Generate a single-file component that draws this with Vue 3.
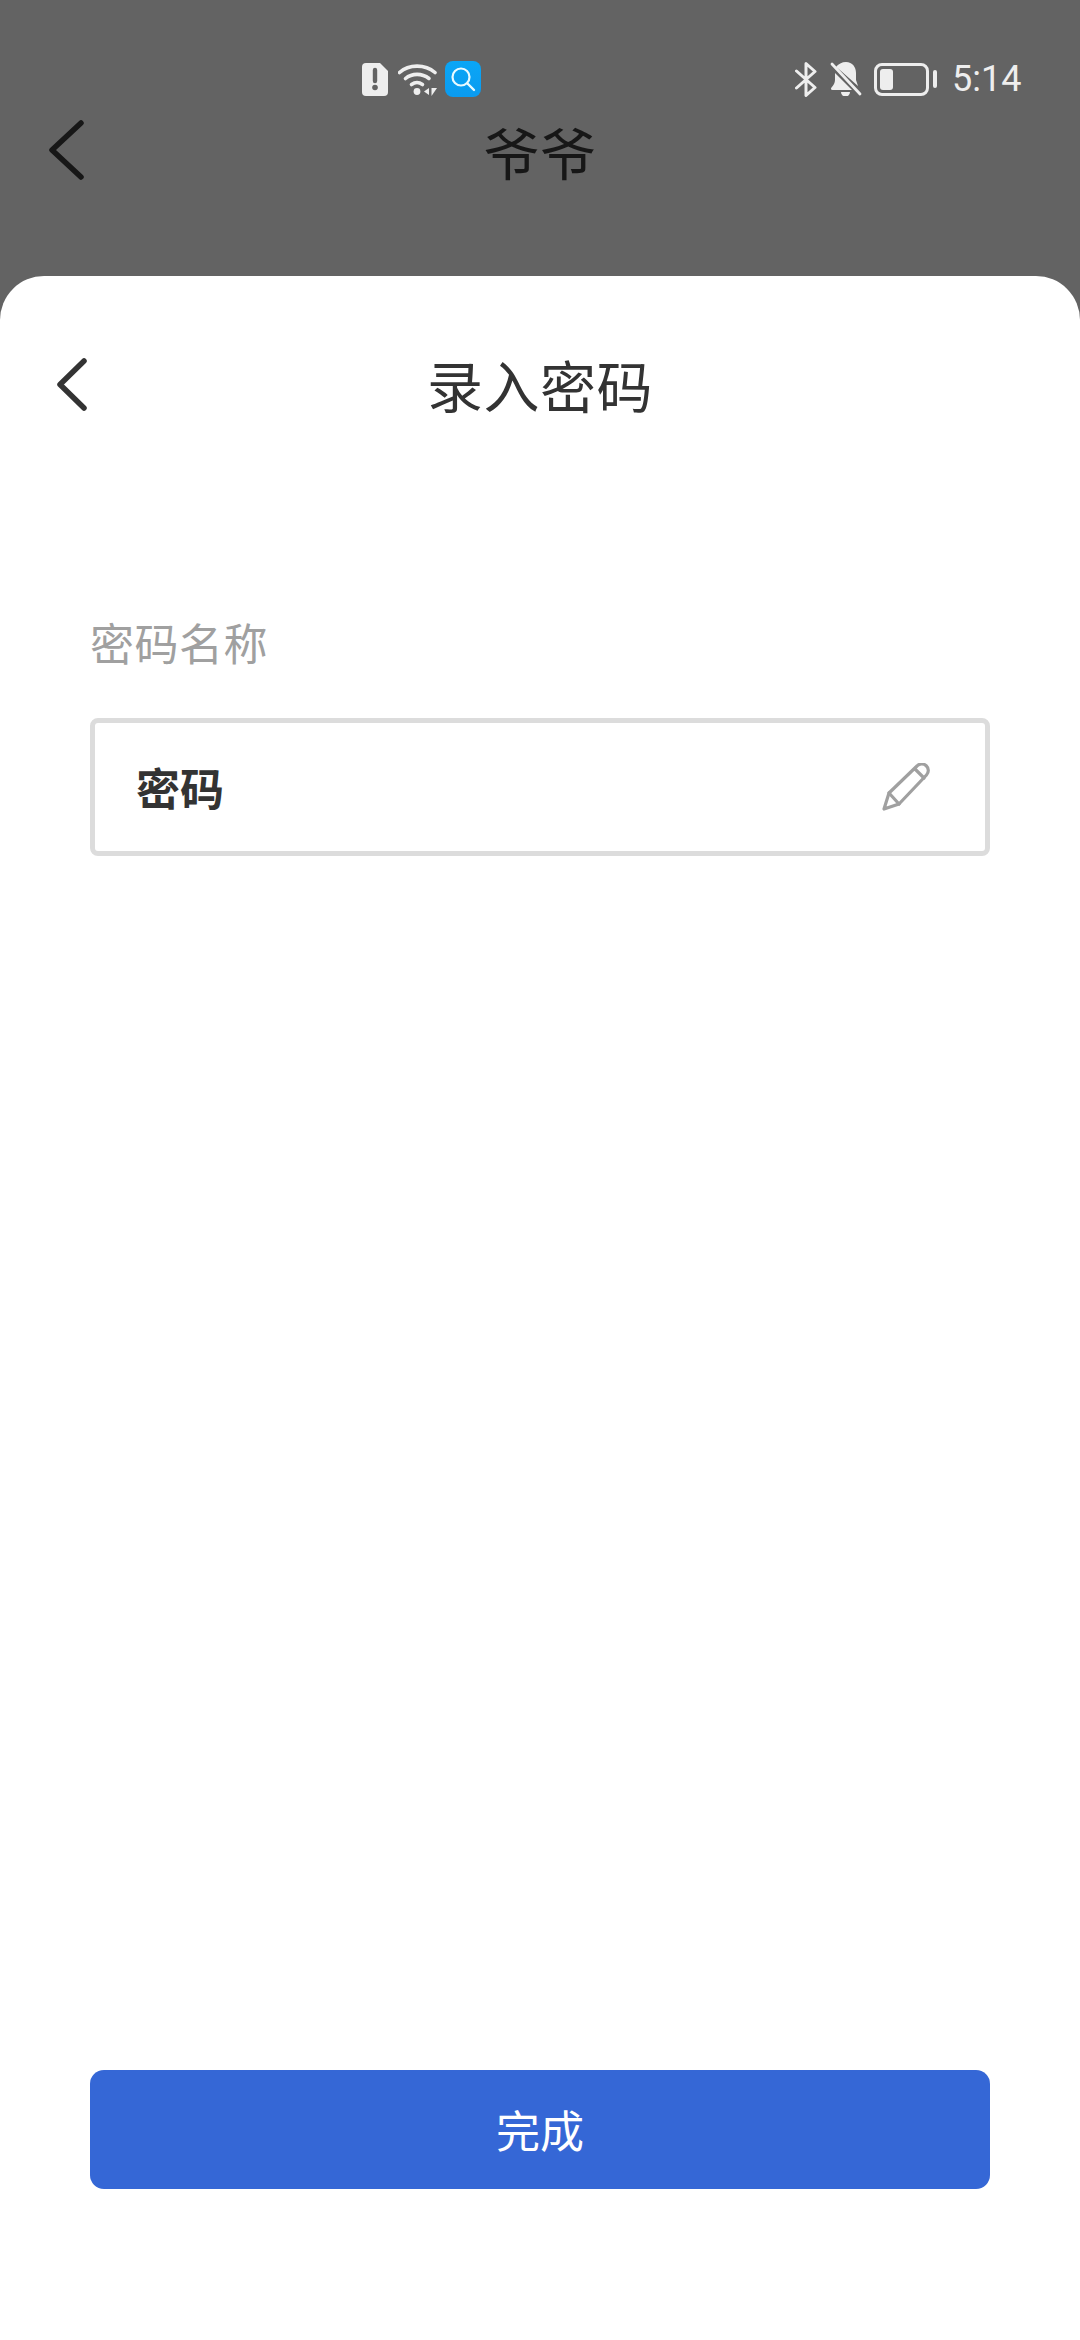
<script setup>
const title = '爷爷'
</script>

<template>
  <div class="page">
    <div class="status">
      <div class="status-left">
        <svg class="i-sim" viewBox="0 0 26 33" width="26" height="33">
          <path d="M4 0H18L26 8V29a4 4 0 0 1-4 4H4a4 4 0 0 1-4-4V4a4 4 0 0 1 4-4Z" fill="#eee"/>
          <path d="M13 7v11" stroke="#636363" stroke-width="4.4" stroke-linecap="round"/>
          <circle cx="13" cy="24.5" r="2.8" fill="#636363"/>
        </svg>
        <svg class="i-wifi" viewBox="0 0 40 33" width="40" height="33" fill="none" stroke="#eee" stroke-linecap="round">
          <path d="M1.500 9.500C11 1 27 1 37 9.500" stroke-width="3.600"/>
          <path d="M7.500 15.500C14 10 24 10 31 15.500" stroke-width="3.600"/>
          <path d="M13.500 21.500C17 19 21 19 24.500 21.500" stroke-width="3.600"/>
          <circle cx="19" cy="28.500" r="3.400" fill="#eee" stroke="none"/>
          <path d="M31 25v7l-5-3.500Z" fill="#eee" stroke="none"/>
          <path d="M33.500 25v8l5.500-8Z" fill="#eee" stroke="none"/>
        </svg>
        <svg class="i-app" viewBox="0 0 36 36" width="36" height="36">
          <defs>
            <linearGradient id="appg" x1="0" y1="0" x2="0" y2="1">
              <stop offset="0" stop-color="#0aa6f6"/>
              <stop offset="1" stop-color="#0b9bf0"/>
            </linearGradient>
          </defs>
          <rect width="36" height="36" rx="8" fill="url(#appg)"/>
          <circle cx="16" cy="16" r="8.500" fill="none" stroke="#eafaff" stroke-width="2.200"/>
          <path d="M22.500 22.500L29 29" stroke="#eafaff" stroke-width="2.400" stroke-linecap="round"/>
        </svg>
      </div>
      <div class="status-right">
        <svg viewBox="0 0 22 35" width="22" height="35" fill="none" stroke="#eee" stroke-width="3" stroke-linecap="round" stroke-linejoin="round">
          <path d="M1.500 9L20 25.500 11 33.500V1.500L20 9.500 1.500 26"/>
        </svg>
        <svg class="i-bell" viewBox="0 0 32 34" width="32" height="34">
          <path d="M16 0c6.500 0 10 5 10 11v7l2 6-17-15L6 5c2-3 6-5 10-5Z" fill="#eee"/>
          <path d="M5 11l17 17H2.500c-1.500 0-2-1.500-1-2.500C3.500 23 5 21 5 18Z" fill="#eee"/>
          <path d="M11 30h9a4.500 4.500 0 0 1-9 0Z" fill="#eee"/>
          <path d="M2 2l28 30" stroke="#eee" stroke-width="2.800" stroke-linecap="round"/>
        </svg>
        <div class="battery">
          <div class="battery-body"><div class="battery-fill"></div></div>
          <div class="battery-nub"></div>
        </div>
        <span class="time">5:14</span>
      </div>
    </div>

    <div class="topnav">
      <svg viewBox="0 0 35 60" width="35" height="60" fill="none" stroke="#171717" stroke-width="5.500" stroke-linecap="round" stroke-linejoin="round">
        <path d="M32 3L3 30l29 27"/>
      </svg>
      <span class="topnav-title">{{ title }}</span>
      <span></span>
    </div>

    <main class="sheet">
      <header class="sheet-nav">
        <svg viewBox="0 0 30 53" width="30" height="53" fill="none" stroke="#333" stroke-width="5.500" stroke-linecap="round" stroke-linejoin="round">
          <path d="M27 3L3 26.500 27 50"/>
        </svg>
        <h1 class="sheet-title">录入密码</h1>
        <span></span>
      </header>

      <label class="field-label">密码名称</label>
      <div class="field">
        <span class="field-value">密码</span>
        <svg class="pencil" viewBox="0 0 48 48" width="48" height="48" fill="none" stroke="#a0a0a0" stroke-width="3.200" stroke-linejoin="round" stroke-linecap="round">
          <path d="M2 46l5-16L35 3a6.300 6.300 0 0 1 9.500 9L17 41Z"/>
          <path d="M7 30l10 11"/>
          <path d="M33 6l9 9"/>
        </svg>
      </div>

      <div class="spacer"></div>
      <button class="done">完成</button>
    </main>
  </div>
</template>

<style>
html, body { margin: 0; padding: 0; }
</style>

<style scoped>
.page {
  width: 1080px;
  height: 2340px;
  background: #636363;
  display: flex;
  flex-direction: column;
  font-family: "Noto Sans CJK SC", "Noto Sans", sans-serif;
  overflow: hidden;
}
.status {
  height: 36px;
  margin-top: 61px;
  display: flex;
  align-items: center;
  justify-content: space-between;
  padding: 0 60px 0 362px;
}
.status-left { display: flex; align-items: center; }
.i-wifi { margin-left: 10px; }
.i-app { margin-left: 7px; }
.status-right { display: flex; align-items: center; }
.i-bell { margin-left: 13px; }
.battery { display: flex; align-items: center; margin-left: 12px; }
.battery-body {
  width: 55px;
  height: 33px;
  box-sizing: border-box;
  border: 3px solid #eee;
  border-radius: 8px;
  padding: 3px;
}
.battery-fill {
  width: 13px;
  height: 100%;
  background: #eee;
  border-radius: 3px;
}
.battery-nub {
  width: 4px;
  height: 18px;
  margin-left: 4px;
  background: #eee;
  border-radius: 2px;
}
.time {
  margin-left: 15px;
  width: 68px;
  font-family: Roboto, sans-serif;
  font-size: 36px;
  font-weight: 400;
  line-height: 36px;
  color: #eee;
}
.topnav {
  height: 179px;
  box-sizing: border-box;
  padding: 22px 49px 0;
  display: grid;
  grid-template-columns: 1fr auto 1fr;
  align-items: start;
}
.topnav svg { margin-top: 1px; }
.topnav-title {
  font-size: 56px;
  line-height: 64px;
  letter-spacing: 0.500px;
  color: #171717;
  text-align: center;
}
.sheet {
  flex: 1;
  min-height: 0;
  background: #fff;
  border-radius: 44px 44px 0 0;
  display: flex;
  flex-direction: column;
  padding: 0 90px 151px;
}
.sheet-nav {
  display: grid;
  grid-template-columns: 1fr auto 1fr;
  align-items: center;
  height: 53px;
  margin: 76px -33px 0;
}
.sheet-nav svg { justify-self: start; }
.sheet-title {
  margin: 0;
  font-size: 56px;
  line-height: 64px;
  font-weight: 400;
  letter-spacing: 0.500px;
  color: #333;
}
.field-label {
  margin-top: 211px;
  font-size: 44px;
  line-height: 52px;
  color: #a0a0a0;
  letter-spacing: 0.500px;
}
.field {
  margin-top: 50px;
  height: 138px;
  box-sizing: border-box;
  border: 5px solid #dcdcdc;
  border-radius: 8px;
  display: flex;
  align-items: center;
  justify-content: space-between;
  padding: 0 55px 0 41px;
}
.field-value {
  font-size: 44px;
  line-height: 52px;
  font-weight: 700;
  color: #333;
}
.spacer { flex: 1; }
.done {
  height: 119px;
  border: 0;
  border-radius: 14px;
  background: #3567d6;
  color: #fff;
  font-family: inherit;
  font-size: 44px;
  line-height: 52px;
  padding: 0 0 2px;
}
</style>
